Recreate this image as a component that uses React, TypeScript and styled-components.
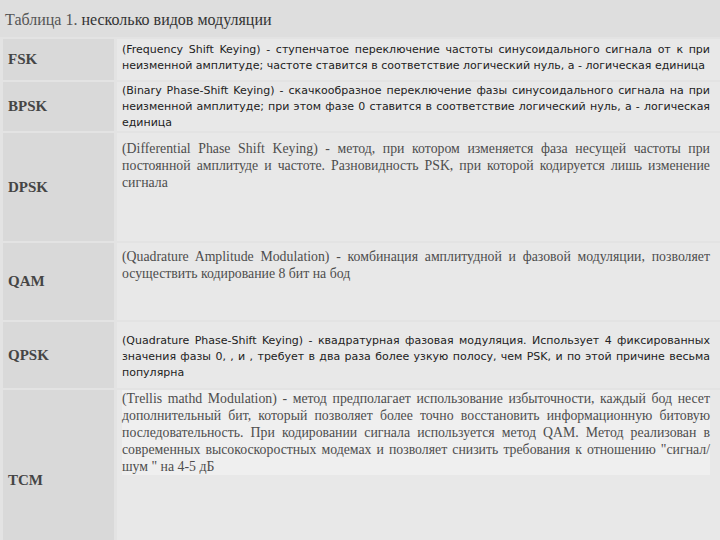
import styled, { createGlobalStyle } from "styled-components";

const Global = createGlobalStyle`
  html, body {
    margin: 0;
    padding: 0;
    background: #dedede;
  }
`;

const Page = styled.div`
  width: 720px;
  height: 540px;
  overflow: hidden;
  background: #dedede;
`;

const Caption = styled.div`
  height: 37px;
  padding-left: 5px;
  display: flex;
  align-items: center;
  padding-top: 2px;
  box-sizing: border-box;
  font-family: "Liberation Serif", serif;
  font-size: 16px;
  color: #333;
`;

const CaptionNumber = styled.span`
  color: #555;
  margin-right: 4px;
`;

const Table = styled.div`
  display: grid;
  grid-template-columns: 111px 1fr;
  column-gap: 3px;
  row-gap: 2px;
  padding: 2px 0 0 3px;
  background: #e3e3e3;
`;

const Label = styled.div`
  background: #d9d9d9;
  display: flex;
  align-items: center;
  padding-left: 5px;
  font-family: "Liberation Serif", serif;
  font-weight: bold;
  font-size: 15px;
  color: #454545;
`;

const Desc = styled.div<{ $h: number; $pad: number }>`
  background: #e8e8e8;
  height: ${(p) => p.$h}px;
  padding: ${(p) => p.$pad}px 10px 0 5px;
  box-sizing: border-box;
`;

const Text = styled.div<{ $serif?: boolean; $shade?: boolean }>`
  font-family: ${(p) =>
    p.$serif ? '"Liberation Serif", serif' : '"DejaVu Sans", sans-serif'};
  font-size: ${(p) => (p.$serif ? "13.8px" : "11px")};
  line-height: ${(p) => (p.$serif ? "17px" : "16px")};
  color: ${(p) => (p.$serif ? "#4d4d4d" : "#222")};
  background: ${(p) => (p.$shade ? "#efefef" : "transparent")};
`;

const Line = styled.span<{ $last?: boolean }>`
  display: block;
  white-space: nowrap;
  text-align: left;
  ${(p) =>
    !p.$last &&
    `
    white-space: normal;
    text-align: justify;
    text-align-last: justify;
  `}
`;

type Row = {
  name: string;
  h: number;
  pad: number;
  serif?: boolean;
  shade?: boolean;
  lines: string[];
};

const rows: Row[] = [
  {
    name: "FSK",
    h: 41,
    pad: 3,
    lines: [
      "(Frequency Shift Keying) - ступенчатое переключение частоты синусоидального сигнала от к при",
      "неизменной амплитуде; частоте ставится в соответствие логический нуль, а - логическая единица",
    ],
  },
  {
    name: "BPSK",
    h: 49,
    pad: 1,
    lines: [
      "(Binary Phase-Shift Keying) - скачкообразное переключение фазы синусоидального сигнала на при",
      "неизменной амплитуде; при этом фазе 0 ставится в соответствие логический нуль, а - логическая",
      "единица",
    ],
  },
  {
    name: "DPSK",
    h: 108,
    pad: 7,
    serif: true,
    lines: [
      "(Differential Phase Shift Keying) - метод, при котором изменяется фаза несущей частоты при",
      "постоянной амплитуде и частоте. Разновидность PSK, при которой кодируется лишь изменение",
      "сигнала",
    ],
  },
  {
    name: "QAM",
    h: 77,
    pad: 5,
    serif: true,
    lines: [
      "(Quadrature Amplitude Modulation) - комбинация амплитудной и фазовой модуляции, позволяет",
      "осуществить кодирование 8 бит на бод",
    ],
  },
  {
    name: "QPSK",
    h: 66,
    pad: 11,
    lines: [
      "(Quadrature Phase-Shift Keying) - квадратурная фазовая модуляция. Использует 4 фиксированных",
      "значения фазы 0, , и , требует в два раза более узкую полосу, чем PSK, и по этой причине весьма",
      "популярна",
    ],
  },
  {
    name: "TCM",
    h: 180,
    pad: 0,
    serif: true,
    shade: true,
    lines: [
      "(Trellis mathd Modulation) - метод предполагает использование избыточности, каждый бод несет",
      "дополнительный бит, который позволяет более точно восстановить информационную битовую",
      "последовательность. При кодировании сигнала используется метод QAM. Метод реализован в",
      "современных высокоскоростных модемах и позволяет снизить требования к отношению \"сигнал/",
      "шум \" на 4-5 дБ",
    ],
  },
];

const App = () => {
  return (
    <Page>
      <Global />
      <Caption>
        <CaptionNumber>Таблица 1.</CaptionNumber>несколько видов модуляции
      </Caption>
      <Table>
        {rows.map((row) => (
          <>
            <Label key={row.name + "-l"}>{row.name}</Label>
            <Desc key={row.name + "-d"} $h={row.h} $pad={row.pad}>
              <Text $serif={row.serif} $shade={row.shade}>
                {row.lines.map((line, i) => (
                  <Line key={i} $last={i === row.lines.length - 1}>
                    {line}
                  </Line>
                ))}
              </Text>
            </Desc>
          </>
        ))}
      </Table>
    </Page>
  );
};

export default App;
